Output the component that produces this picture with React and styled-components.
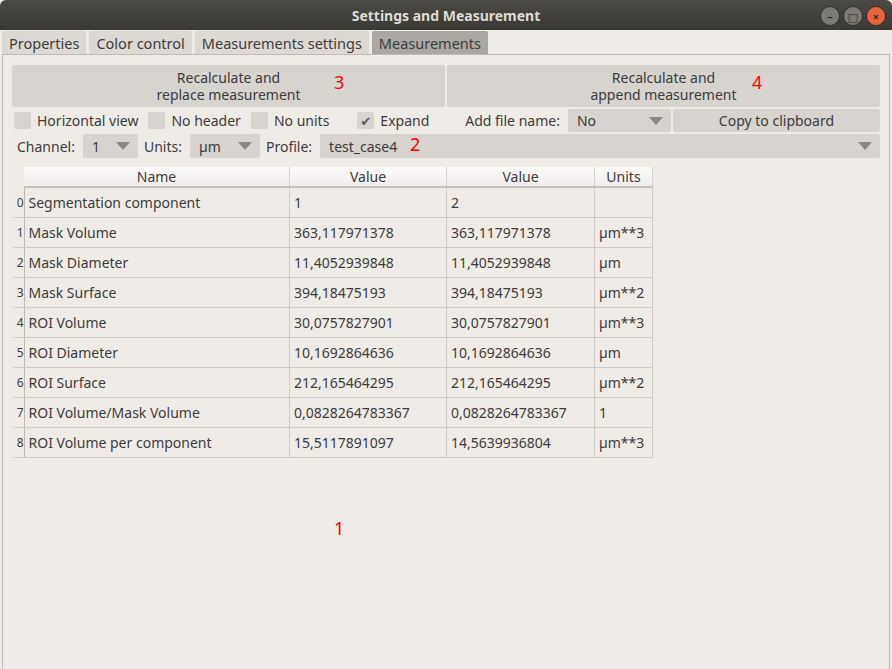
import React from "react";
import styled, { createGlobalStyle } from "styled-components";

const G = createGlobalStyle`
  html,body{margin:0;padding:0;background:#efebe7;}
  body{font-family:"Noto Sans","DejaVu Sans",sans-serif;font-size:14px;color:#3c3c3c;}
`;
const Win = styled.div`width:892px;height:669px;display:flex;flex-direction:column;background:#efebe7;overflow:hidden;`;
const Title = styled.div`height:30px;flex:none;background:linear-gradient(#4a4945,#3a3935);border-radius:6px 6px 0 0;display:flex;align-items:center;justify-content:center;position:relative;color:#dfdbd2;font-weight:bold;font-size:14px;`;
const Ctrls = styled.div`position:absolute;right:6px;top:6px;display:flex;gap:3px;`;
const Ctl = styled.div`width:18px;height:18px;border-radius:50%;background:${p=>p.c||"#7b7a76"};border:1px solid #2f2e2b;display:flex;align-items:center;justify-content:center;color:#2d2c29;font-size:11px;line-height:1;`;
const Tabs = styled.div`display:flex;gap:3px;padding:1px 2px 0;height:23px;`;
const Tab = styled.div`padding:0 ${p=>p.px||7}px;display:flex;align-items:center;background:${p=>p.a?"#aba7a3":"#dcd8d4"};color:#3c3c3c;border-radius:2px 2px 0 0;font-size:14.5px;`;
const Panel = styled.div`flex:1;margin:0 2px;border:1px solid #bebab6;border-bottom:none;padding:10px 9px 0;display:flex;flex-direction:column;gap:2px;`;
const Row = styled.div`display:flex;gap:2px;align-items:center;height:${p=>p.h||23}px;`;
const Big = styled.div`flex:1;height:100%;background:#d7d3cf;border-radius:2px;display:flex;align-items:center;justify-content:center;text-align:center;line-height:17px;position:relative;`;
const Num = styled.span`color:#f00;font-size:18px;position:absolute;left:${p=>p.x}px;top:${p=>p.y}px;`;
const Chk = styled.label`display:flex;align-items:center;gap:6px;margin-left:${p=>p.ml||0}px;margin-right:8px;`;
const Box = styled.span`width:17px;height:17px;background:#d7d3cf;border-radius:2px;display:flex;align-items:center;justify-content:center;color:#5e5c5a;font-size:13px;`;
const Lbl = styled.span`margin:0 6px 0 ${p=>p.ml||0}px;`;
const Combo = styled.div`height:100%;width:${p=>p.w?p.w+"px":"auto"};flex:${p=>p.f?1:"none"};background:#d7d3cf;border-radius:2px;display:flex;align-items:center;justify-content:space-between;padding:0 8px 0 9px;box-sizing:border-box;position:relative;`;
const Arrow = styled.span`width:0;height:0;border-left:7px solid transparent;border-right:7px solid transparent;border-top:8px solid #8a8784;`;
const Btn = styled.div`flex:1;height:100%;background:#d7d3cf;border-radius:2px;display:flex;align-items:center;justify-content:center;`;
const Wrap = styled.div`margin-left:1px;`;
const Table = styled.table`border-collapse:collapse;table-layout:fixed;width:637px;margin-top:7px;font-size:14px;`;
const Th = styled.th`font-weight:normal;height:18px;padding:0;background:linear-gradient(#fbfaf9,#efedeb);border-right:1px solid #d6d2ce;border-bottom:2px solid #c6c2be;width:${p=>p.w}px;`;
const Corner = styled.th`padding:0;width:11px;`;
const Rh = styled.td`padding:0;font-size:12px;text-align:right;border-right:1px solid #bcb8b4;border-bottom:1px solid #d0ccc8;color:#3c3c3c;`;
const Td = styled.td`height:29px;padding:0 0 0 4px;border:1px solid #cfcbc7;border-top:none;text-align:left;white-space:nowrap;overflow:hidden;`;
const Rest = styled.div`flex:1;position:relative;`;

const rows=[["Segmentation component","1","2",""],["Mask Volume","363,117971378","363,117971378","µm**3"],["Mask Diameter","11,4052939848","11,4052939848","µm"],["Mask Surface","394,18475193","394,18475193","µm**2"],["ROI Volume","30,0757827901","30,0757827901","µm**3"],["ROI Diameter","10,1692864636","10,1692864636","µm"],["ROI Surface","212,165464295","212,165464295","µm**2"],["ROI Volume/Mask Volume","0,0828264783367","0,0828264783367","1"],["ROI Volume per component","15,5117891097","14,5639936804","µm**3"]];

export default function App(){return(<Win><G/>
<Title>Settings and Measurement<Ctrls><Ctl>–</Ctl><Ctl>□</Ctl><Ctl c="#e9643a">×</Ctl></Ctrls></Title>
<Tabs><Tab>Properties</Tab><Tab>Color control</Tab><Tab>Measurements settings</Tab><Tab a>Measurements</Tab></Tabs>
<Panel>
<Row h={42}><Big>Recalculate and<br/>replace measurement<Num x={322} y={9}>3</Num></Big><Big>Recalculate and<br/>append measurement<Num x={305} y={9}>4</Num></Big></Row>
<Row><Chk ml={2}><Box/>Horizontal view</Chk><Chk><Box/>No header</Chk><Chk><Box/>No units</Chk><Chk ml={18}><Box>✔</Box>Expand</Chk><Lbl ml={26}>Add file name:</Lbl><Combo w={103}>No<Arrow/></Combo><Btn>Copy to clipboard</Btn></Row>
<Row h={24}><Lbl ml={5}>Channel:</Lbl><Combo w={55}>1<Arrow/></Combo><Lbl ml={4}>Units:</Lbl><Combo w={70}>µm<Arrow/></Combo><Lbl ml={4}>Profile:</Lbl><Combo f>test_case4<Num x={90} y={-2}>2</Num><Arrow/></Combo></Row>
<Wrap><Table><thead><tr><Corner/><Th w={265}>Name</Th><Th w={156}>Value</Th><Th w={147}>Value</Th><Th w={57}>Units</Th></tr></thead>
<tbody>{rows.map((r,i)=>(<tr key={i}><Rh>{i}</Rh>{r.map((c,j)=><Td key={j}>{c}</Td>)}</tr>))}</tbody></Table></Wrap>
<Rest><Num x={322} y={56}>1</Num></Rest>
</Panel></Win>);}
